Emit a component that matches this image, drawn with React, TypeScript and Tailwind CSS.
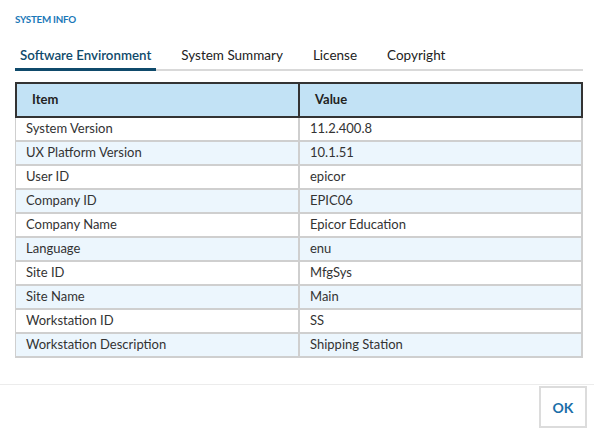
import React from "react";

const rows: [string, string][] = [
  ["System Version", "11.2.400.8"],
  ["UX Platform Version", "10.1.51"],
  ["User ID", "epicor"],
  ["Company ID", "EPIC06"],
  ["Company Name", "Epicor Education"],
  ["Language", "enu"],
  ["Site ID", "MfgSys"],
  ["Site Name", "Main"],
  ["Workstation ID", "SS"],
  ["Workstation Description", "Shipping Station"],
];

const tabs = ["Software Environment", "System Summary", "License", "Copyright"];

const App: React.FC = () => {
  return (
    <div
      className="w-[594px] h-[429px] bg-white flex flex-col text-[#333]"
      style={{ fontFamily: "Lato, 'Liberation Sans', sans-serif" }}
    >
      <div className="px-[15px] pt-[13px] flex-1">
        <div className="text-[9.8px] font-bold text-[#1a78b8] tracking-tight leading-[12px]">
          SYSTEM INFO
        </div>

        <div className="mt-[20px] flex border-b-2 border-[#d9d9d9] w-[568px]">
          {tabs.map((t, i) => (
            <div
              key={t}
              className={
                i === 0
                  ? "px-[5px] pb-[3px] -mb-[2px] border-b-[3px] border-[#0f4a6b] text-[#0f4a6b] font-semibold text-[13.3px] leading-[20px]"
                  : "ml-[20px] px-[5px] pb-[3px] text-[13.5px] leading-[20px] text-[#222]"
              }
            >
              {t}
            </div>
          ))}
        </div>

        <div className="mt-[11px] w-[568px]">
          <div className="flex h-[36px] bg-[#c2e2f5] border-2 border-[#333] text-[13px] font-bold text-[#222]">
            <div className="w-[283px] border-r-2 border-[#333] flex items-center pl-[15px]">Item</div>
            <div className="flex-1 flex items-center pl-[15px]">Value</div>
          </div>
          <div className="border-l border-r-2 border-[#cfcfcf]">
            {rows.map(([k, v], i) => (
              <div
                key={k}
                className={`flex h-[24px] border-b-2 border-[#cfcfcf] text-[13px] ${
                  i % 2 === 1 ? "bg-[#ecf6fd]" : "bg-white"
                }`}
              >
                <div className="w-[284px] border-r-2 border-[#cfcfcf] flex items-center pl-[10px] pb-[1px]">
                  {k}
                </div>
                <div className="flex-1 flex items-center pl-[10px] pb-[1px]">{v}</div>
              </div>
            ))}
          </div>
        </div>
      </div>

      <div className="border-t border-[#ececec] h-[45px] flex justify-end items-start pr-[7px] pt-[1px]">
        <button className="w-[48px] h-[42px] border-2 border-[#dcdcdc] bg-white text-[#1a6ea8] font-bold text-[14px]">
          OK
        </button>
      </div>
    </div>
  );
};

export default App;
